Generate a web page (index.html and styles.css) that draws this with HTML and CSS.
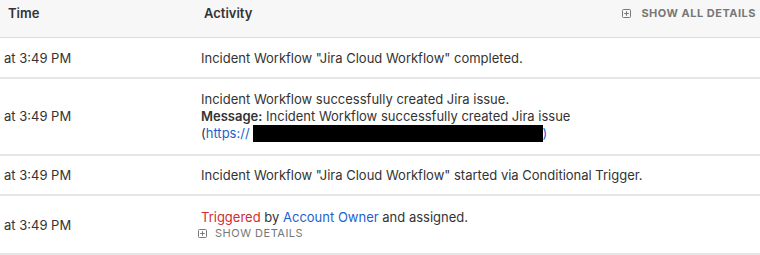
FILE: index.html
```html
<!DOCTYPE html>
<html>
<head>
<meta charset="utf-8">
<link rel="stylesheet" href="styles.css">
</head>
<body>
<div class="table">
  <div class="row head">
    <div class="time">Time</div>
    <div class="act head-act">
      <span>Activity</span>
      <span class="show-all"><svg class="plus" width="9" height="9" viewBox="0 0 9 9"><rect x="0.5" y="0.5" width="8" height="8" rx="1" fill="none" stroke="currentColor"/><path d="M4.5 2.2v4.6M2.2 4.5h4.6" stroke="currentColor"/></svg>SHOW ALL DETAILS</span>
    </div>
  </div>
  <div class="row r1">
    <div class="time">at 3:49 PM</div>
    <div class="act">Incident Workflow "Jira Cloud Workflow" completed.</div>
  </div>
  <div class="row r2">
    <div class="time">at 3:49 PM</div>
    <div class="act">
      <div>Incident Workflow successfully created Jira issue.</div>
      <div><b>Message:</b> Incident Workflow successfully created Jira issue</div>
      <div>(<span class="link">https://</span><span class="redact"></span><span class="link">)</span></div>
    </div>
  </div>
  <div class="row r3">
    <div class="time">at 3:49 PM</div>
    <div class="act">Incident Workflow "Jira Cloud Workflow" started via Conditional Trigger.</div>
  </div>
  <div class="row r4">
    <div class="time">at 3:49 PM</div>
    <div class="act">
      <div><span class="red">Triggered</span> by <span class="link">Account Owner</span> and assigned.</div>
      <div class="show"><svg class="plus" width="9" height="9" viewBox="0 0 9 9"><rect x="0.5" y="0.5" width="8" height="8" rx="1" fill="none" stroke="currentColor"/><path d="M4.5 2.2v4.6M2.2 4.5h4.6" stroke="currentColor"/></svg>SHOW DETAILS</div>
    </div>
  </div>
</div>
</body>
</html>
```
FILE: styles.css
```css
html, body { margin: 0; padding: 0; background: #fff; }
body { font-family: "Inter", "Noto Sans", sans-serif; font-size: 13px; color: #333; }
.table { width: 760px; }
.row { display: grid; grid-template-columns: 201px 1fr; align-items: center; border-bottom: 2px solid #e6e6e6; }
.time { padding-left: 4px; }
.head { height: 38px; box-sizing: border-box; padding-top: 5px; align-items: start; background: #f7f7f7; border-bottom: 1px solid #dcdcdc; font-weight: 600; color: #333; }
.head .time { padding-left: 8px; }
.head-act { display: flex; justify-content: space-between; align-items: center; padding-left: 3px; padding-right: 4px; }
.show-all { display: flex; align-items: center; gap: 10px; font-size: 11px; font-weight: 700; letter-spacing: 0.5px; color: #777; }
.plus { display: block; }
.r1 { height: 39px; }
.r2 { height: 75px; line-height: 17px; }
.r3 { height: 38px; }
.r4 { height: 57px; }
.link { color: #1e5fce; }
.red { color: #d42a36; }
.redact { display: inline-block; width: 290px; height: 17px; margin-left: 3px; background: #000; vertical-align: top; }
b { font-weight: 600; }
.show { display: flex; align-items: center; gap: 8px; margin-top: 1px; font-size: 11px; letter-spacing: 0.5px; color: #777; margin-left: -3px; }
```
